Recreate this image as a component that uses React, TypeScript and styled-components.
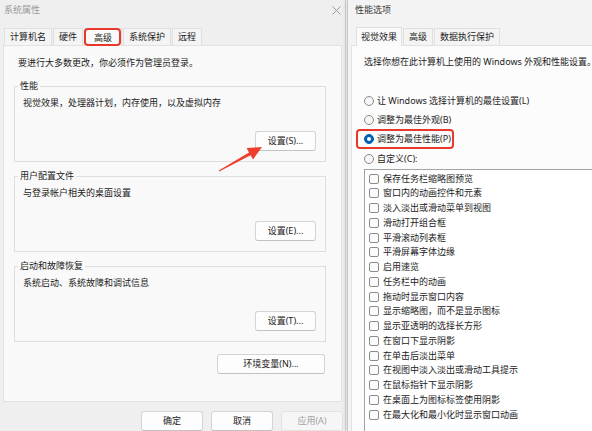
import React from 'react';
import styled, { createGlobalStyle, css } from 'styled-components';

const GlobalStyle = createGlobalStyle`
  html, body { margin: 0; padding: 0; }
  body {
    background: #f0f0f0;
    font-family: 'Noto Sans', 'Noto Sans CJK SC', sans-serif;
    font-size: 9px;
    line-height: 12px;
    color: #1b1b1b;
  }
  * { box-sizing: border-box; }
`;

const Screen = styled.div`
  position: relative;
  display: flex;
  width: 592px;
  height: 431px;
  overflow: hidden;
`;

const LeftWindow = styled.section`
  width: 346px;
  flex-shrink: 0;
  display: flex;
  flex-direction: column;
  background: #efefef;
  border-right: 1px solid #d2d2d2;
`;

const RightWindow = styled.section`
  width: 300px;
  flex-shrink: 0;
  display: flex;
  flex-direction: column;
  margin-left: 1px;
  background: #f3f3f3;
  border-left: 1px solid #c9c9c9;
  box-shadow: -2px 0 4px rgba(0, 0, 0, 0.08);
`;

const TitleBar = styled.div<{ $active?: boolean; $inset: number }>`
  height: 20px;
  display: flex;
  align-items: center;
  justify-content: space-between;
  padding: 0 4px 0 ${({ $inset }) => $inset}px;
  color: ${({ $active }) => ($active ? '#3a3a3a' : '#9a9a9a')};
`;

const TabStrip = styled.div<{ $inset: number }>`
  height: 25px;
  display: flex;
  align-items: flex-end;
  gap: 1px;
  padding-left: ${({ $inset }) => $inset}px;
`;

const Tab = styled.div<{ $selected?: boolean; $marked?: boolean }>`
  position: relative;
  display: flex;
  align-items: center;
  height: 17px;
  padding: 0 5px;
  border: 1px solid #e0e0e0;
  border-bottom: none;
  background: #f4f4f4;
  white-space: nowrap;
  ${({ $selected }) =>
    $selected &&
    css`
      height: 19px;
      padding: 0 4px;
      margin-bottom: -1px;
      background: #fafafa;
      z-index: 1;
    `}
  ${({ $marked }) =>
    $marked &&
    css`
      height: 18px;
      padding: 0 9px;
      &::after {
        content: '';
        position: absolute;
        top: -1px;
        bottom: 0;
        left: -1px;
        right: 0;
        border: 2px solid #e8382c;
        border-radius: 4px;
      }
    `}
`;

const LeftPanel = styled.div`
  height: 357px;
  margin: 0 3px;
  display: flex;
  flex-direction: column;
  padding: 11px 15px 0 10px;
  background: #f9f9f9;
  border: 1px solid #e2e2e2;
`;

const Intro = styled.div<{ $indent?: number }>`
  width: max-content;
  margin-left: ${({ $indent }) => $indent ?? 0}px;
  white-space: nowrap;
`;

const GroupBox = styled.fieldset<{ $first?: boolean }>`
  margin: ${({ $first }) => ($first ? 11 : 8)}px 0 0;
  padding: 0;
  min-width: 0;
  border: 1px solid #dedede;
`;

const GroupTitle = styled.legend`
  margin-left: 3px;
  padding: 0 2px;
  line-height: 12px;
`;

const GroupBody = styled.div`
  padding: 5px 9px 10px 8px;
`;

const ButtonRow = styled.div<{ $top: number; $right?: number }>`
  display: flex;
  justify-content: flex-end;
  gap: 8px;
  margin-top: ${({ $top }) => $top}px;
  padding-right: ${({ $right }) => $right ?? 0}px;
`;

const Button = styled.button<{ $width: number }>`
  width: ${({ $width }) => $width}px;
  height: 20px;
  padding: 0;
  font: inherit;
  color: #1b1b1b;
  background: #fdfdfd;
  border: 1px solid #d4d4d4;
  border-bottom-color: #c2c2c2;
  border-radius: 3px;
  &:disabled {
    color: #a3a3a3;
    background: #f6f6f6;
    border-color: #e2e2e2;
  }
`;

const Footer = styled.div`
  display: flex;
  justify-content: flex-end;
  gap: 8px;
  padding: 9px 2px 0 0;
`;

const RightPanel = styled.div`
  flex: 1;
  display: flex;
  flex-direction: column;
  margin-left: 3px;
  padding: 10px 0 0 12px;
  background: #fcfcfc;
  border: 1px solid #e2e2e2;
  border-bottom: none;
`;

const RadioGroup = styled.div`
  margin-top: 23px;
  display: flex;
  flex-direction: column;
`;

const RadioRow = styled.div`
  height: 19.3px;
  display: flex;
  align-items: center;
`;

const RadioLabel = styled.label<{ $marked?: boolean }>`
  position: relative;
  display: inline-flex;
  align-items: center;
  gap: 3px;
  height: 16px;
  white-space: nowrap;
  ${({ $marked }) =>
    $marked &&
    css`
      &::after {
        content: '';
        position: absolute;
        top: -2px;
        bottom: -2px;
        left: -8px;
        right: -3px;
        border: 2px solid #e8382c;
        border-radius: 4px;
      }
    `}
`;

const RadioMark = styled.span<{ $checked?: boolean }>`
  position: relative;
  width: 10px;
  height: 10px;
  border-radius: 50%;
  border: 1px solid #8a8a8a;
  background: #f7f7f7;
  ${({ $checked }) =>
    $checked &&
    css`
      border-color: #0060b5;
      background: #0060b5;
      &::after {
        content: '';
        position: absolute;
        left: 2px;
        top: 2px;
        width: 4px;
        height: 4px;
        border-radius: 50%;
        background: #ffffff;
      }
    `}
`;

const OptionList = styled.div`
  flex: 1;
  margin-top: 1px;
  padding: 1px 0 0 4px;
  background: #ffffff;
  border: 1px solid #a3a3a3;
  border-bottom: none;
`;

const OptionItem = styled.div`
  height: 14.75px;
  display: flex;
  align-items: center;
  gap: 4px;
  white-space: nowrap;
`;

const CheckMark = styled.span`
  width: 10px;
  height: 10px;
  border: 1px solid #8c8c8c;
  border-radius: 2px;
  background: #fbfbfb;
`;

const CloseIcon = styled.svg`
  width: 9px;
  height: 9px;
  stroke: #9a9a9a;
  stroke-width: 1;
`;

const ArrowMark = styled.svg`
  position: absolute;
  left: 214px;
  top: 142px;
  width: 52px;
  height: 34px;
`;

const groups = [
  { title: '性能', text: '视觉效果，处理器计划，内存使用，以及虚拟内存', button: '设置(S)...' },
  { title: '用户配置文件', text: '与登录帐户相关的桌面设置', button: '设置(E)...' },
  { title: '启动和故障恢复', text: '系统启动、系统故障和调试信息', button: '设置(T)...' },
];

const radios = [
  { label: '让 Windows 选择计算机的最佳设置(L)' },
  { label: '调整为最佳外观(B)' },
  { label: '调整为最佳性能(P)', checked: true },
  { label: '自定义(C):' },
];

const options = [
  '保存任务栏缩略图预览',
  '窗口内的动画控件和元素',
  '淡入淡出或滑动菜单到视图',
  '滑动打开组合框',
  '平滑滚动列表框',
  '平滑屏幕字体边缘',
  '启用速览',
  '任务栏中的动画',
  '拖动时显示窗口内容',
  '显示缩略图，而不是显示图标',
  '显示亚透明的选择长方形',
  '在窗口下显示阴影',
  '在单击后淡出菜单',
  '在视图中淡入淡出或滑动工具提示',
  '在鼠标指针下显示阴影',
  '在桌面上为图标标签使用阴影',
  '在最大化和最小化时显示窗口动画',
];

const App: React.FC = () => {
  return (
    <Screen>
      <GlobalStyle />
      <LeftWindow>
        <TitleBar $inset={4}>
          <span>系统属性</span>
          <CloseIcon viewBox="0 0 9 9">
            <line x1="0.5" y1="0.5" x2="8.5" y2="8.5" />
            <line x1="8.5" y1="0.5" x2="0.5" y2="8.5" />
          </CloseIcon>
        </TitleBar>
        <TabStrip $inset={4}>
          <Tab>计算机名</Tab>
          <Tab>硬件</Tab>
          <Tab $selected $marked>高级</Tab>
          <Tab>系统保护</Tab>
          <Tab>远程</Tab>
        </TabStrip>
        <LeftPanel>
          <Intro $indent={4}>要进行大多数更改，你必须作为管理员登录。</Intro>
          {groups.map((g, index) => (
            <GroupBox key={g.title} $first={index === 0}>
              <GroupTitle>{g.title}</GroupTitle>
              <GroupBody>
                <div>{g.text}</div>
                <ButtonRow $top={22}>
                  <Button $width={61}>{g.button}</Button>
                </ButtonRow>
              </GroupBody>
            </GroupBox>
          ))}
          <ButtonRow $top={12} $right={1}>
            <Button $width={108}>环境变量(N)...</Button>
          </ButtonRow>
        </LeftPanel>
        <Footer>
          <Button $width={62}>确定</Button>
          <Button $width={62}>取消</Button>
          <Button $width={62} disabled>
            应用(A)
          </Button>
        </Footer>
      </LeftWindow>

      <RightWindow>
        <TitleBar $inset={7} $active>
          <span>性能选项</span>
        </TitleBar>
        <TabStrip $inset={8}>
          <Tab $selected>视觉效果</Tab>
          <Tab>高级</Tab>
          <Tab>数据执行保护</Tab>
        </TabStrip>
        <RightPanel>
          <Intro>选择你想在此计算机上使用的 Windows 外观和性能设置。</Intro>
          <RadioGroup>
            {radios.map((r) => (
              <RadioRow key={r.label}>
                <RadioLabel $marked={r.checked}>
                  <RadioMark $checked={r.checked} />
                  {r.label}
                </RadioLabel>
              </RadioRow>
            ))}
          </RadioGroup>
          <OptionList>
            {options.map((o) => (
              <OptionItem key={o}>
                <CheckMark />
                {o}
              </OptionItem>
            ))}
          </OptionList>
        </RightPanel>
      </RightWindow>

      <ArrowMark viewBox="0 0 52 34">
        <polygon
          points="4.8,28.6 35,10.4 32.6,6.1 48,5 39,17.5 36.6,13.2 5.2,29.4"
          fill="#ec3f2d"
        />
      </ArrowMark>
    </Screen>
  );
};

export default App;
